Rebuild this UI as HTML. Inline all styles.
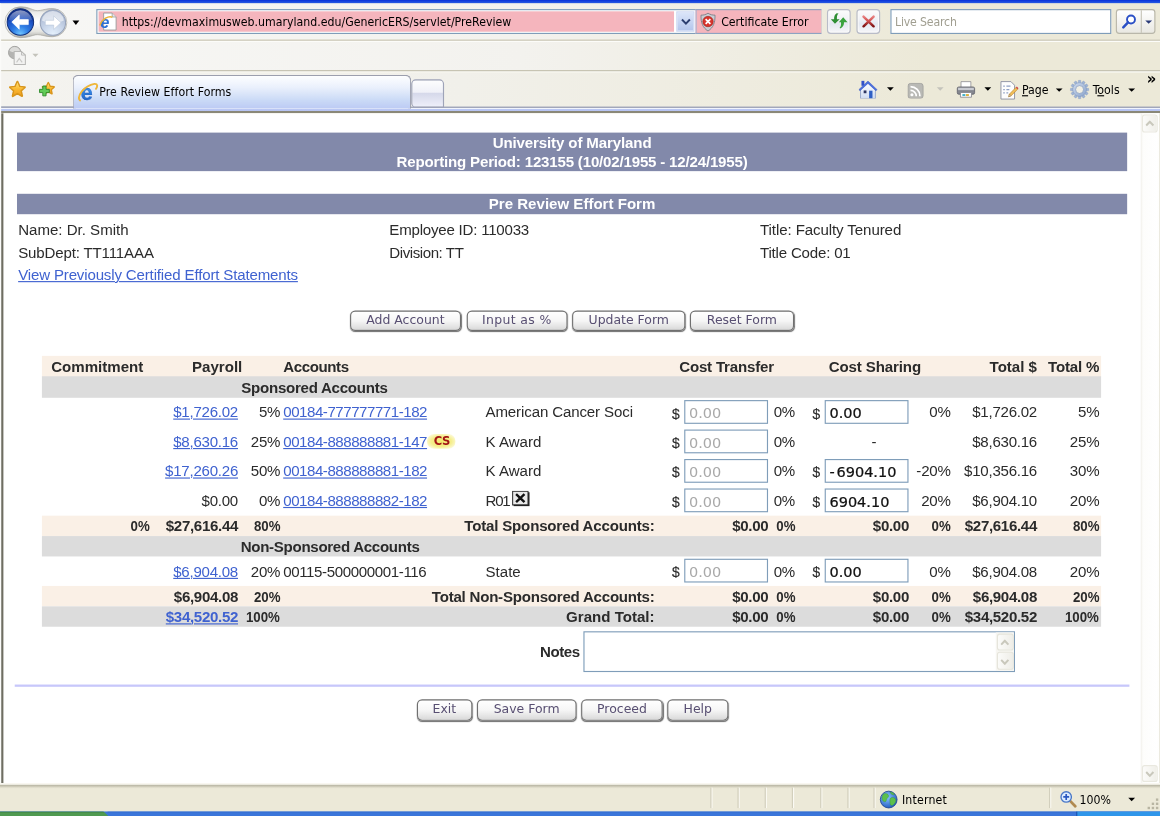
<!DOCTYPE html>
<html lang="en">
<head>
<meta charset="utf-8">
<title>Pre Review Effort Forms</title>
<style>
html,body{margin:0;padding:0;background:#ece9d8;overflow:hidden;}
body{width:1160px;height:816px;position:relative;}
#w{filter:blur(0.42px);position:absolute;left:0;top:0;width:1024px;height:720px;transform-origin:0 0;transform:scale(1.1328125,1.1333333);overflow:hidden;background:#ece9d8;font-family:"DejaVu Sans Condensed","DejaVu Sans",sans-serif;font-size:10.8px;color:#000;}
#w *{box-sizing:border-box;}
.abs{position:absolute;}
/* ---------- chrome ---------- */
#tstrip{position:absolute;left:0;top:0;width:1024px;height:3.4px;background:linear-gradient(#0831d9,#2a5fe4);}
#nav{position:absolute;left:0;top:3px;width:1024px;height:33px;background:linear-gradient(90deg,#f7f7f5 0%,#f3f2ee 45%,#ece9d8 80%);border-bottom:1px solid #c2bfae;}
#row2{position:absolute;left:0;top:36px;width:1024px;height:27px;background:linear-gradient(90deg,#f7f7f5 0%,#f3f2ee 45%,#ece9d8 80%);border-top:1px solid #fdfdfb;border-bottom:1px solid #b9b6a5;}
#tabs{position:absolute;left:0;top:63px;width:1024px;height:32px;background:linear-gradient(90deg,#f4f3ef 0%,#f1f0ea 40%,#ece9d8 80%);border-top:1px solid #fbfbf8;}
#tabline{position:absolute;left:0;top:94.2px;width:1024px;height:6px;background:linear-gradient(#a2a7ba 0,#a2a7ba .9px,#f1f4fc .9px,#f1f4fc 1.8px,#bcc9f4 1.8px,#b6c3f2 4.1px,#8a8878 4.1px,#8a8878 5.6px,#d8d7d0 6px);}
/* ---------- content ---------- */
#content{position:absolute;left:0;top:100px;width:1024px;height:591px;background:#fff;border-left:1px solid #f4f3ee;font-family:"Liberation Sans",sans-serif;font-size:13px;color:#2e2e2e;}
#lb{position:absolute;left:1.1px;top:99.6px;width:1.8px;height:592px;background:#6f6e62;}
#status{position:absolute;left:0;top:691px;width:1024px;height:25px;background:#ece9d8;border-top:1px solid #fbfaf5;}
#taskbar{position:absolute;left:0;top:716px;width:1024px;height:4px;background:#3b76da;}

/* ---------- page ---------- */
#pg{position:absolute;left:0;top:0;width:1024px;height:720px;font-family:"Liberation Sans",sans-serif;font-size:13.3px;color:#2b2b2b;}
#pg a{color:#3f62d0;text-decoration:underline;text-decoration-thickness:1.1px;text-underline-offset:1.1px;}
.band{position:absolute;left:15px;width:980px;background:#8289aa;color:#fff;font-weight:bold;text-align:center;white-space:nowrap;}
.t{position:absolute;white-space:nowrap;line-height:18px;height:18px;}
.btn{position:absolute;height:18.4px;margin-top:0.2px;border:1.05px solid #707070;border-radius:4.6px;background:linear-gradient(#ffffff 0%,#f6f6f6 50%,#e6e6e6 78%,#d9d9d9 100%);box-shadow:0.3px 0.9px 0.9px rgba(60,60,60,.75);font-family:"DejaVu Sans",sans-serif;font-size:11px;line-height:16.6px;color:#584f72;text-align:center;white-space:nowrap;}
.r{position:absolute;left:37px;width:935px;}
.h18{height:18px;line-height:19px;}
.h26{height:26px;line-height:26.4px;--dy:.3px;}
.lin{background:#faf0e6;}
.gry{background:#dcdcdc;}
.c{position:absolute;top:0;white-space:nowrap;transform:translateY(var(--dy,0px));}
.b{font-weight:bold;}
.n{letter-spacing:-0.22px;}
.b .n{letter-spacing:-0.28px;}
.na{letter-spacing:-0.4px;}
.b .bp{letter-spacing:0;transform:translateY(var(--dy,0px)) scaleX(.88);transform-origin:100% 50%;}
.k1{right:839.4px}.k2{right:761.9px}.k3{right:724.6px}.k4{left:213px}.k5{left:391.6px}.k6{right:394.2px}
.k7{left:556.2px}.k8{right:270.2px}.k8b{right:293.8px}.k9{left:680.2px}.k10{right:132.9px}.k10b{right:169.6px}.k11{right:56.6px}.k12{right:1.6px}
.ds{font-size:12.2px;top:1.3px;-webkit-text-stroke:0.15px #2b2b2b;}
.inp{position:absolute;top:1.85px;width:74px;height:21.8px;border:1px solid #7f9db9;background:#fff;font-family:"DejaVu Sans",sans-serif;font-size:12.8px;line-height:21px;padding-left:2.9px;color:#111;white-space:nowrap;overflow:hidden;}
.i1{left:567.3px;color:#a9a9a9;}
.i2{left:691.3px;-webkit-text-stroke:0.22px #111;}

/* ---------- chrome details ---------- */
.ct{position:absolute;white-space:nowrap;font-family:"DejaVu Sans Condensed","DejaVu Sans",sans-serif;font-size:10.8px;line-height:14px;color:#000;}
.ar{position:absolute;width:0;height:0;border-left:3.2px solid transparent;border-right:3.2px solid transparent;border-top:3.6px solid #000;}
#addr{position:absolute;left:85px;top:8px;width:640px;height:22px;border:1px solid #7f9db9;background:#fff;}
#addr .pink{position:absolute;left:1px;top:1px;width:508.4px;height:18px;background:#f5b5bd;}
#addr .dd{position:absolute;left:511px;top:1px;width:15.6px;height:18px;background:linear-gradient(#dbe5f9,#b4c6ec);border:1px solid #c9d6f2;}
#addr .cert{position:absolute;left:527.6px;top:-1px;width:111.4px;height:22px;background:#f5b5bd;border-top:1px solid #8da3c2;border-bottom:1px solid #8da3c2;border-left:1px solid #a9b3cf;}
.nbtn{position:absolute;top:8.3px;width:21.2px;height:21.4px;border:1px solid #b9bcc8;border-radius:3.2px;background:linear-gradient(#fcfcfc 0%,#f1f2f6 40%,#e3e7f1 60%,#f7f7f9 100%);box-shadow:inset 0 0 0 1px #fafafa;}
#srch{position:absolute;left:786px;top:8px;width:194.5px;height:21.5px;border:1px solid #7f9db9;background:#fff;}
#sbtn{position:absolute;left:984.5px;top:8px;width:35px;height:21.5px;border:1px solid #b9b7aa;border-radius:3px;background:linear-gradient(#ffffff,#e9e8e2);}
#tab{position:absolute;left:64.3px;top:65.6px;width:299.2px;height:30.9px;border:1px solid #9c9fae;border-bottom:none;border-radius:5px 5px 0 0;background:linear-gradient(#fdfeff 0%,#eaf0fc 35%,#c9d9f6 75%,#bccaf4 100%);z-index:2;}
#ntab{position:absolute;left:363px;top:69.5px;width:29.4px;height:25.4px;border:1px solid #9ea3b8;border-radius:4px 4px 0 4px;background:linear-gradient(#fdfdfe 0%,#f0f1f8 45%,#d6d9ea 50%,#eeeffa 100%);z-index:1;}
.ssep{position:absolute;top:695px;width:1px;height:18px;background:#d2cfbd;box-shadow:1px 0 0 #fbfaf4;}

.sbb{position:absolute;left:1007.5px;width:14.4px;height:15.5px;border:1px solid #e9e8df;border-radius:2.5px;background:linear-gradient(90deg,#fbfbf9,#f0efe9);}
.tsb{position:absolute;left:879.6px;width:15px;border:1px solid #e6e5dc;border-radius:2.5px;background:linear-gradient(90deg,#fbfbf9,#efeee8);}
</style>
</head>
<body>
<div id="w">
<div id="tstrip"></div>
<div id="nav"></div>
<svg class="abs" style="left:2px;top:4px;" width="64" height="32" viewBox="0 0 64 32">
 <defs>
  <radialGradient id="gb" cx="50%" cy="95%" r="85%"><stop offset="0" stop-color="#6fc4ff"/><stop offset=".35" stop-color="#2f7fe6"/><stop offset=".7" stop-color="#1d52c4"/><stop offset="1" stop-color="#0c2a86"/></radialGradient>
  <linearGradient id="gbg" x1="0" y1="0" x2="0" y2="1"><stop offset="0" stop-color="#fff" stop-opacity=".55"/><stop offset="1" stop-color="#fff" stop-opacity=".05"/></linearGradient>
  <radialGradient id="gf" cx="50%" cy="95%" r="85%"><stop offset="0" stop-color="#e4f0fc"/><stop offset=".5" stop-color="#c9d6ea"/><stop offset="1" stop-color="#a9b7d0"/></radialGradient>
  <linearGradient id="gp" x1="0" y1="0" x2="0" y2="1"><stop offset="0" stop-color="#a9a9a5"/><stop offset=".18" stop-color="#ecece9"/><stop offset=".5" stop-color="#ffffff"/><stop offset=".8" stop-color="#e4e4e0"/><stop offset="1" stop-color="#adada8"/></linearGradient>
 </defs>
 <path d="M16 2 C24 2 27 5.4 31 5.4 C35 5.4 38 3.6 44.6 3.6 A12.4 12.4 0 0 1 44.6 28.4 C38 28.4 35 26.6 31 26.6 C27 26.6 24 29.2 16 29.2 A13.6 13.6 0 0 1 16 2Z" fill="url(#gp)" stroke="#a5a5a0" stroke-width=".6"/>
 <circle cx="16" cy="15.5" r="11.7" fill="url(#gb)" stroke="#12307a" stroke-width=".9"/>
 <path d="M5.6 13.5 A10.6 10.6 0 0 1 26.4 13.5 C21 16.4 11 16.4 5.6 13.5Z" fill="url(#gbg)"/>
 <path d="M8.4 15.5 L15 9.2 L15 13.3 L23 13.3 L23 17.7 L15 17.7 L15 21.8Z" fill="#fff" stroke="#fff" stroke-width=".6" stroke-linejoin="round"/>
 <circle cx="44.7" cy="16" r="11.2" fill="url(#gf)" stroke="#95a2ba" stroke-width=".9"/>
 <path d="M35 14 A9.8 9.8 0 0 1 54.4 14 C49 16.6 40 16.6 35 14Z" fill="#fff" fill-opacity=".55"/>
 <path d="M51.8 16 L45.4 10 L45.4 13.9 L38 13.9 L38 18.1 L45.4 18.1 L45.4 22Z" fill="#fff" stroke="#b9c4d8" stroke-width=".5" stroke-linejoin="round"/>
</svg>
<div class="ar" style="left:64.4px;top:17.8px;border-left-width:3.8px;border-right-width:3.8px;border-top-width:4.3px;"></div>
<div id="addr">
 <div class="pink"></div>
 <svg class="abs" style="left:0.8px;top:1px;" width="17" height="18" viewBox="0 0 17 18">
  <path d="M4.5 1.5 H12 L15.5 5 V16.5 H4.5Z" fill="#fff" stroke="#9a9a9a" stroke-width=".8"/>
  <path d="M12 1.5 V5 H15.5" fill="#e6e6e6" stroke="#9a9a9a" stroke-width=".7"/>
  <text x="1.6" y="14.6" font-family="Liberation Sans, sans-serif" font-weight="bold" font-style="italic" font-size="14.5" fill="#2a6fd6">e</text>
  <path d="M1.2 12.5 C3 6.5 9 3.8 12.2 5.2" fill="none" stroke="#e8b33a" stroke-width="1.3"/>
 </svg>
 <div class="ct" style="left:21.4px;top:4px;">https://devmaximusweb.umaryland.edu/GenericERS/servlet/PreReview</div>
 <div class="dd"><svg class="abs" style="left:2.5px;top:5px;" width="9" height="7" viewBox="0 0 9 7"><path d="M1 1.2 L4.5 4.8 L8 1.2" fill="none" stroke="#2c3f70" stroke-width="1.7"/></svg></div>
 <div class="cert">
  <svg class="abs" style="left:3.6px;top:2px;" width="14" height="17" viewBox="0 0 14 17">
   <path d="M7 .6 C5 2 3 2.4 .8 2.4 C.6 9 2.4 13.4 7 16.4 C11.6 13.4 13.4 9 13.2 2.4 C11 2.4 9 2 7 .6Z" fill="#c9ccd2" stroke="#7c7f88" stroke-width=".8"/>
   <circle cx="7" cy="8" r="4.6" fill="#d8342c" stroke="#9c1c18" stroke-width=".5"/>
   <path d="M4.9 5.9 L9.1 10.1 M9.1 5.9 L4.9 10.1" stroke="#fff" stroke-width="1.5"/>
  </svg>
  <div class="ct" style="left:22px;top:4px;">Certificate Error</div>
 </div>
</div>
<div class="nbtn" style="left:729.8px;">
 <svg class="abs" style="left:-1px;top:-1px;" width="21.2" height="21.4" viewBox="0 0 21.2 21.4">
  <path d="M7.06 12.9 L3.4 9 L6.3 9 C6.2 6.4 7 4.6 8.6 3.7 L10.2 3.9 C9 5 8.7 6.6 8.8 9 L11.2 9Z" fill="#2f8f35"/>
  <path d="M14.37 7.3 L18.2 11.7 L15.1 11.7 C15.2 14.2 14 16.4 11.6 17.2 L11.2 16.6 C12.4 15.6 12.6 13.8 12.4 11.7 L10.5 11.7Z" fill="#3aa23e"/>
 </svg>
</div>
<div class="nbtn" style="left:755.8px;">
 <svg class="abs" style="left:-1px;top:-1px;" width="21.2" height="21.4" viewBox="0 0 21.2 21.4">
  <defs><linearGradient id="gx" x1="0" y1="0" x2="0" y2="1"><stop offset="0" stop-color="#e88080"/><stop offset=".45" stop-color="#d05050"/><stop offset="1" stop-color="#7e1212"/></linearGradient></defs>
  <path d="M6.3 6.6 L15.2 15.2 M15.2 6.6 L6.3 15.2" stroke="url(#gx)" stroke-width="2.2" stroke-linecap="round"/>
 </svg>
</div>
<div id="srch"><div class="ct" style="left:3px;top:3.6px;color:#a09e90;letter-spacing:-.15px;">Live Search</div></div>
<div id="sbtn">
 <div class="abs" style="left:21px;top:0;width:1px;height:19.5px;background:#c6c4b8;"></div>
 <svg class="abs" style="left:4px;top:3px;" width="14" height="14" viewBox="0 0 14 14"><circle cx="8.4" cy="5.2" r="3.5" fill="#fff" stroke="#2b50c6" stroke-width="1.7"/><path d="M5.8 7.8 L1.6 12.2" stroke="#2b50c6" stroke-width="2.2" stroke-linecap="round"/></svg>
 <div class="ar" style="left:25px;top:8.6px;border-top-color:#2a3a78;"></div>
</div>
<div id="row2"></div>
<svg class="abs" style="left:6px;top:40px;" width="30" height="18" viewBox="0 0 30 18">
 <circle cx="7" cy="6.4" r="5.5" fill="#b4b4b2" stroke="#a0a09e" stroke-width=".8"/><path d="M2.4 5 A4.8 4.8 0 0 1 11.6 5 C8.6 6.6 5.4 6.6 2.4 5Z" fill="#dcdcda"/>
 <path d="M6.5 5.5 H13 L16.4 8.6 V17 H6.5Z" fill="#f2f2f1" stroke="#b8b8b6" stroke-width=".9"/>
 <path d="M13 5.5 V8.6 H16.4" fill="none" stroke="#b8b8b6" stroke-width=".8"/>
 <path d="M8.6 15 L11 11.6 L13.6 15" fill="none" stroke="#c8c8c6" stroke-width="1"/>
 <path d="M22.6 7.4 H28 L25.3 10.4Z" fill="#c4c3bb"/>
</svg>
<div id="tabs"></div>
<div class="abs" style="left:0;top:94px;width:64.5px;height:1px;background:#9aa3b8;"></div>
<svg class="abs" style="left:6.6px;top:69.6px;" width="45" height="18" viewBox="0 0 50 20">
 <defs><linearGradient id="gs" x1="0" y1="0" x2="0" y2="1"><stop offset="0" stop-color="#ffe27a"/><stop offset=".5" stop-color="#fbbb34"/><stop offset="1" stop-color="#f0a020"/></linearGradient></defs>
 <path d="M9.3 2.4 L11.5 7.2 L16.6 7.8 L12.8 11.3 L13.9 16.4 L9.3 13.8 L4.7 16.4 L5.8 11.3 L2 7.8 L7.1 7.2Z" fill="url(#gs)" stroke="#d9961c" stroke-width="2" stroke-linejoin="round"/><path d="M9.3 3 L11.1 7.6 L15.6 8.1 L12.2 11 L13.2 15.4 L9.3 13.1 L5.4 15.4 L6.4 11 L3 8.1 L7.5 7.6Z" fill="url(#gs)"/>
 <path d="M39.6 3.4 L41.3 7 L45.2 7.5 L42.3 10.1 L43.1 14 L39.6 12 L36.1 14 L36.9 10.1 L34 7.5 L37.9 7Z" fill="url(#gs)" stroke="#d9961c" stroke-width="1.8" stroke-linejoin="round"/><path d="M39.6 4 L41 7.4 L44.4 7.8 L41.8 10 L42.5 13.2 L39.6 11.5 L36.7 13.2 L37.4 10 L34.8 7.8 L38.2 7.4Z" fill="url(#gs)"/>
 <path d="M31.4 8.2 H34.6 V5 H37.8 V8.2 H41 V11.4 H37.8 V14.6 H34.6 V11.4 H31.4Z" fill="#62cc58" stroke="#2d8a2c" stroke-width=".9" stroke-linejoin="round" transform="translate(-.4 1.6)"/>
</svg>
<div id="tab">
 <svg class="abs" style="left:2.6px;top:5.6px;" width="20" height="19" viewBox="0 0 20 19">
  <defs><linearGradient id="ge" x1="0" y1="0" x2="0" y2="1"><stop offset="0" stop-color="#6fb4f4"/><stop offset=".5" stop-color="#2f80e0"/><stop offset="1" stop-color="#1a56b8"/></linearGradient></defs>
  <text x="3.2" y="15.8" font-family="Liberation Sans, sans-serif" font-weight="bold" font-size="19" fill="url(#ge)" stroke="#1d58b4" stroke-width=".3">e</text>
  <path d="M2.6 16.6 C-0.6 13 6 3.6 15.4 2 C18.4 1.8 18.2 4.2 16.8 6.4" fill="none" stroke="#eeb63a" stroke-width="1.7" stroke-linecap="round"/>
 </svg>
 <div class="ct" style="left:22.4px;top:8.7px;letter-spacing:.05px;">Pre Review Effort Forms</div>
</div>
<div id="ntab"></div>
<!-- right toolbar -->
<svg class="abs" style="left:758.4px;top:70.6px;" width="16.4" height="16.4" viewBox="0 0 16 16">
 <defs><linearGradient id="gh" x1="0" y1="0" x2="0" y2="1"><stop offset="0" stop-color="#ffffff"/><stop offset="1" stop-color="#cfdcf2"/></linearGradient></defs>
 <rect x="2.4" y=".2" width="2.5" height="4.4" fill="#3252c8"/>
 <path d="M8 2 L14.4 8 V15.6 H1.6 V8Z" fill="url(#gh)" stroke="#8a9cc4" stroke-width=".7"/>
 <path d="M8 .5 L15.9 7.9 L14.9 8.9 L8 2.6 L1.1 8.9 L.1 7.9Z" fill="#4a6fe0" stroke="#3454c0" stroke-width=".4"/>
 <rect x="9" y="8.8" width="2.9" height="6.6" fill="#2f5fc4"/>
 <rect x="4.3" y="8.6" width="2.4" height="2.4" fill="#2c3560"/>
</svg>
<div class="ar" style="left:783.2px;top:77.2px;"></div>
<svg class="abs" style="left:801px;top:72.6px;" width="14.6" height="14.6" viewBox="0 0 16 16">
 <rect x=".6" y=".6" width="14.6" height="14.6" rx="2.6" fill="#b9b9b5" stroke="#a2a29e" stroke-width=".8"/>
 <circle cx="4.4" cy="11.6" r="1.5" fill="#fff"/>
 <path d="M3 7.4 A5.6 5.6 0 0 1 8.6 13 M3 3.8 A9.2 9.2 0 0 1 12.2 13" fill="none" stroke="#fff" stroke-width="1.6"/>
</svg>
<div class="ar" style="left:826.6px;top:77.2px;border-top-color:#c4c3bb;"></div>
<svg class="abs" style="left:844.2px;top:70.8px;" width="17.4" height="16" viewBox="0 0 20 18">
 <path d="M5 1 H15 V7 H5Z" fill="#fff" stroke="#8a8a90" stroke-width=".8"/>
 <rect x="1.2" y="6.4" width="17.6" height="7.4" rx="1.6" fill="#84868e" stroke="#5e6068" stroke-width=".8"/>
 <rect x="2" y="7.2" width="16" height="2.4" fill="#c9cbd2"/>
 <path d="M4.4 12 H15.6 V16.8 H4.4Z" fill="#fff" stroke="#7e8088" stroke-width=".8"/>
 <rect x="6.4" y="13.6" width="3" height="2" fill="#44b0c8"/><rect x="10" y="13.6" width="3" height="2" fill="#d8b040"/>
</svg>
<div class="ar" style="left:869px;top:77.2px;"></div>
<svg class="abs" style="left:882px;top:70.5px;" width="18" height="18" viewBox="0 0 18 18">
 <path d="M1.6 1 H10.4 L13.6 4.2 V16.4 H1.6Z" fill="#fdfdfd" stroke="#8b8fa0" stroke-width=".8"/>
 <path d="M3.6 5 H5 M3.6 8 H5 M3.6 11 H5 M6.4 5 H10 M6.4 8 H9 M6.4 11 H8" stroke="#8fa0c4" stroke-width="1.1"/>
 <path d="M8.4 14.4 L9.1 12 L14.8 6.2 L16.3 7.7 L10.6 13.5Z" fill="#f2c05a" stroke="#b27616" stroke-width=".5"/><path d="M14.8 6.2 L15.6 5.4 L17.1 6.9 L16.3 7.7Z" fill="#d04040"/>
 <path d="M8.4 14.4 L9.1 12 L10.6 13.5Z" fill="#e8d6b0" stroke="#8a6a3a" stroke-width=".4"/>
</svg>
<div class="ct" style="left:902.2px;top:73.2px;"><u>P</u>age</div>
<div class="ar" style="left:932.3px;top:78.1px;"></div>
<svg class="abs" style="left:943.6px;top:70.2px;" width="18" height="18" viewBox="0 0 18 18">
 <defs><linearGradient id="gr" x1="0" y1="0" x2="1" y2="1"><stop offset="0" stop-color="#cfdbee"/><stop offset="1" stop-color="#8ba4cc"/></linearGradient></defs>
 <g fill="#9fb4d6" stroke="#7f98c0" stroke-width=".3">
  <g id="tt"><rect x="7.9" y=".9" width="2.2" height="2.6" rx=".4"/><rect x="7.9" y="14.5" width="2.2" height="2.6" rx=".4"/></g><use href="#tt" transform="rotate(30 9 9)"/><use href="#tt" transform="rotate(60 9 9)"/><use href="#tt" transform="rotate(90 9 9)"/><use href="#tt" transform="rotate(120 9 9)"/><use href="#tt" transform="rotate(150 9 9)"/>
 </g>
 <circle cx="9" cy="9" r="6.1" fill="url(#gr)" stroke="#7f98c0" stroke-width=".5"/>
 <circle cx="9" cy="9" r="3.5" fill="#f1efe4" stroke="#7f98c0" stroke-width=".6"/>
</svg>
<div class="ct" style="left:964.6px;top:73.2px;">T<u>o</u>ols</div>
<div class="ar" style="left:995.6px;top:78.1px;"></div>
<div class="ct" style="left:1012.4px;top:62px;font-size:14.5px;font-weight:bold;letter-spacing:-1px;">»</div>
<div id="tabline"></div>
<div id="content"></div>
<div id="lb"></div>
<div class="abs" style="left:0;top:3.4px;width:.9px;height:712px;background:#fbfbf9;"></div>
<div id="pg">
<div class="band" style="top:117.2px;height:33.9px;"><div class="abs" style="left:0;width:980px;top:1.9px;line-height:16px;letter-spacing:-.11px">University of Maryland</div><div class="abs" style="left:0;width:980px;top:18.2px;line-height:16px;letter-spacing:-.16px">Reporting Period: 123155 (10/02/1955 - 12/24/1955)</div></div>
<div class="band" style="top:171px;height:18px;line-height:18px;">Pre Review Effort Form</div>
<div class="t" style="left:16px;top:193.9px;">Name: Dr. Smith</div>
<div class="t" style="left:343.7px;top:193.9px;letter-spacing:-.19px;">Employee ID: 110033</div>
<div class="t" style="left:670.9px;top:193.9px;letter-spacing:-.08px;">Title: Faculty Tenured</div>
<div class="t" style="left:16px;top:214.1px;letter-spacing:-.13px;transform:translateY(.5px);">SubDept: TT111AAA</div>
<div class="t" style="left:343.7px;top:214.1px;letter-spacing:-.38px;transform:translateY(.5px);">Division: TT</div>
<div class="t" style="left:670.9px;top:214.1px;letter-spacing:-.17px;transform:translateY(.5px);">Title Code: 01</div>
<div class="t" style="left:16px;top:234px;letter-spacing:-.14px;"><a>View Previously Certified Effort Statements</a></div>

<div class="btn" style="left:309px;top:273.5px;width:97.7px;">Add Account</div>
<div class="btn" style="left:411.6px;top:273.5px;width:89.4px;"><span style="letter-spacing:.3px">Input as %</span></div>
<div class="btn" style="left:505.4px;top:273.5px;width:99.3px;">Update Form</div>
<div class="btn" style="left:609.1px;top:273.5px;width:91.6px;">Reset Form</div>

<div class="r h18 lin b" style="top:314.4px;height:18.3px;">
 <span class="c" style="left:8.2px;">Commitment</span>
 <span class="c" style="left:132.5px;">Payroll</span>
 <span class="c k4" style="letter-spacing:-.35px">Accounts</span>
 <span class="c" style="left:562.6px;letter-spacing:-.17px">Cost Transfer</span>
 <span class="c" style="left:694.6px;letter-spacing:-.11px">Cost Sharing</span>
 <span class="c k11">Total $</span>
 <span class="c k12" style="letter-spacing:-.15px">Total %</span>
</div>
<div class="r h18 gry b" style="top:332.4px;height:18.2px;--dy:.35px;"><span class="c" style="left:176px;letter-spacing:-.23px">Sponsored Accounts</span></div>

<div class="r h26" style="top:350.7px;">
 <span class="c k2 n"><a>$1,726.02</a></span><span class="c k3 n">5%</span><span class="c k4 na"><a>00184-777777771-182</a></span>
 <span class="c k5" style="letter-spacing:-.11px">American Cancer Soci</span>
 <span class="c k7 ds">$</span><div class="inp i1">0.00</div><span class="c k8 n">0%</span>
 <span class="c k9 ds">$</span><div class="inp i2">0.00</div><span class="c k10 n">0%</span>
 <span class="c k11 n">$1,726.02</span><span class="c k12 n">5%</span>
</div>
<div class="r h26" style="top:376.7px;">
 <span class="c k2 n"><a>$8,630.16</a></span><span class="c k3 n">25%</span><span class="c k4 na"><a>00184-888888881-147</a></span>
 <span class="c k5">K Award</span>
 <span class="c k7 ds">$</span><div class="inp i1">0.00</div><span class="c k8 n">0%</span>
 <span class="c" style="left:732.3px;">-</span>
 <span class="c k11 n">$8,630.16</span><span class="c k12 n">25%</span>
</div>
<div class="r h26" style="top:402.7px;">
 <span class="c k2 n"><a>$17,260.26</a></span><span class="c k3 n">50%</span><span class="c k4 na"><a>00184-888888881-182</a></span>
 <span class="c k5">K Award</span>
 <span class="c k7 ds">$</span><div class="inp i1">0.00</div><span class="c k8 n">0%</span>
 <span class="c k9 ds">$</span><div class="inp i2"><span style="letter-spacing:1.6px">-</span>6904.10</div><span class="c k10 n">-20%</span>
 <span class="c k11 n">$10,356.16</span><span class="c k12 n">30%</span>
</div>
<div class="r h26" style="top:428.7px;">
 <span class="c k2 n">$0.00</span><span class="c k3 n">0%</span><span class="c k4 na"><a>00184-888888882-182</a></span>
 <span class="c k5" style="letter-spacing:-1.1px">R01</span>
 <span class="c k7 ds">$</span><div class="inp i1">0.00</div><span class="c k8 n">0%</span>
 <span class="c k9 ds">$</span><div class="inp i2">6904.10</div><span class="c k10 n">20%</span>
 <span class="c k11 n">$6,904.10</span><span class="c k12 n">20%</span>
</div>
<div class="r h18 lin b" style="top:454.7px;--dy:-.6px;">
 <span class="c k1 n bp">0%</span><span class="c k2 n">$27,616.44</span><span class="c k3 n bp">80%</span>
 <span class="c k6" style="letter-spacing:-.17px">Total Sponsored Accounts:</span>
 <span class="c k8b n">$0.00</span><span class="c k8 n bp">0%</span>
 <span class="c k10b n">$0.00</span><span class="c k10 n bp">0%</span>
 <span class="c k11 n">$27,616.44</span><span class="c k12 n bp">80%</span>
</div>
<div class="r h18 gry b" style="top:472.7px;"><span class="c" style="left:175.5px;letter-spacing:-.26px">Non-Sponsored Accounts</span></div>
<div class="r h26" style="top:490.7px;line-height:27.4px;--dy:-.15px;">
 <span class="c k2 n"><a>$6,904.08</a></span><span class="c k3 n">20%</span><span class="c k4 na" style="letter-spacing:-.33px">00115-500000001-116</span>
 <span class="c k5">State</span>
 <span class="c k7 ds">$</span><div class="inp i1">0.00</div><span class="c k8 n">0%</span>
 <span class="c k9 ds">$</span><div class="inp i2">0.00</div><span class="c k10 n">0%</span>
 <span class="c k11 n">$6,904.08</span><span class="c k12 n">20%</span>
</div>
<div class="r h18 lin b" style="top:516.7px;--dy:-.2px;">
 <span class="c k2 n">$6,904.08</span><span class="c k3 n bp">20%</span>
 <span class="c k6" style="letter-spacing:-.2px">Total Non-Sponsored Accounts:</span>
 <span class="c k8b n">$0.00</span><span class="c k8 n bp">0%</span>
 <span class="c k10b n">$0.00</span><span class="c k10 n bp">0%</span>
 <span class="c k11 n">$6,904.08</span><span class="c k12 n bp">20%</span>
</div>
<div class="r h18 gry b" style="top:534.7px;">
 <span class="c k2 n"><a>$34,520.52</a></span><span class="c k3 n bp">100%</span>
 <span class="c k6">Grand Total:</span>
 <span class="c k8b n">$0.00</span><span class="c k8 n bp">0%</span>
 <span class="c k10b n">$0.00</span><span class="c k10 n bp">0%</span>
 <span class="c k11 n">$34,520.52</span><span class="c k12 n bp">100%</span>
</div>

<div class="t b" style="left:476.7px;top:566.6px;letter-spacing:-.38px;">Notes</div>
<div class="abs" style="left:515.3px;top:557px;width:381.2px;height:35.7px;border:1px solid #7f9db9;background:#fff;"></div>
<div class="abs" style="left:12.8px;top:604.2px;width:983.8px;height:1.4px;background:#c7c7fb;"></div>

<div class="btn" style="left:367.5px;top:617.2px;width:49.6px;">Exit</div>
<div class="btn" style="left:421.1px;top:617.2px;width:87.6px;">Save Form</div>
<div class="btn" style="left:513.1px;top:617.2px;width:71.9px;">Proceed</div>
<div class="btn" style="left:589.2px;top:617.2px;width:53.5px;">Help</div>

<!-- page scrollbar -->
<div class="abs" style="left:1006.5px;top:100px;width:17.5px;height:591px;background:linear-gradient(90deg,#f1f0ea 0,#fdfdfb 2px,#ffffff 14px,#fefefc 16.2px,#e9e7dc 16.4px,#f3f2ec 100%);"></div>
<div class="sbb" style="top:101.2px;"><svg class="abs" style="left:2.4px;top:4px;" width="8" height="6" viewBox="0 0 8 6"><path d="M.8 4.8 L4 1.4 L7.2 4.8" fill="none" stroke="#c9c8bc" stroke-width="1.8"/></svg></div>
<div class="sbb" style="top:674.5px;"><svg class="abs" style="left:2.4px;top:4.4px;" width="8" height="6" viewBox="0 0 8 6"><path d="M.8 1.2 L4 4.6 L7.2 1.2" fill="none" stroke="#c9c8bc" stroke-width="1.8"/></svg></div>
<!-- textarea scrollbar -->
<div class="abs" style="left:878.6px;top:558px;width:16.9px;height:33.7px;background:#f7f6f2;"></div>
<div class="tsb" style="top:559.2px;height:15px;"><svg class="abs" style="left:2.6px;top:3.6px;" width="8" height="6" viewBox="0 0 8 6"><path d="M.8 4.8 L4 1.4 L7.2 4.8" fill="none" stroke="#c9c8bc" stroke-width="1.8"/></svg></div>
<div class="tsb" style="top:575.4px;height:15.4px;"><svg class="abs" style="left:2.6px;top:4.2px;" width="8" height="6" viewBox="0 0 8 6"><path d="M.8 1.2 L4 4.6 L7.2 1.2" fill="none" stroke="#c9c8bc" stroke-width="1.8"/></svg></div>
<!-- cs badge -->
<div class="abs" style="left:377.4px;top:382.8px;width:24.6px;height:13px;border-radius:6px;background:radial-gradient(ellipse at center,#f3e96a 0%,#f5ee8c 50%,rgba(250,245,180,.5) 80%,rgba(250,245,190,0) 100%);"></div>
<div class="abs" style="left:382.8px;top:383px;font-family:'DejaVu Sans',sans-serif;font-weight:bold;font-size:10.2px;line-height:13px;color:#a31616;letter-spacing:-0.2px;">CS</div>
<!-- x box -->
<svg class="abs" style="left:452.2px;top:433px;" width="15.4" height="13.6" viewBox="0 0 15.4 13.6">
 <rect x=".5" y=".5" width="13.6" height="12" fill="#e9e9e9" stroke="#3c3c3c" stroke-width="1"/>
 <path d="M14.8 1.4 V13.1 H1.4" fill="none" stroke="#222" stroke-width="1.3"/>
 <path d="M3.6 3 L11 10 M11 3 L3.6 10" stroke="#111" stroke-width="2.1"/>
</svg>
</div>

<div id="status"></div>
<div class="abs" style="left:0;top:691.8px;width:1024px;height:4.4px;background:linear-gradient(#f4f3ec 0%,#bdbaa8 28%,#d3d0be 55%,#e6e3d2 80%,#ece9d8 100%);"></div>
<div class="ssep" style="left:627px;"></div><div class="ssep" style="left:651px;"></div><div class="ssep" style="left:675px;"></div><div class="ssep" style="left:699px;"></div><div class="ssep" style="left:723.5px;"></div><div class="ssep" style="left:747.5px;"></div><div class="ssep" style="left:771px;"></div><div class="ssep" style="left:926px;"></div>
<svg class="abs" style="left:776px;top:697px;" width="17" height="17" viewBox="0 0 17 17">
 <defs><radialGradient id="gg" cx="40%" cy="35%" r="70%"><stop offset="0" stop-color="#8cc8ff"/><stop offset="1" stop-color="#1e58c0"/></radialGradient></defs>
 <circle cx="8.5" cy="8.5" r="7.4" fill="url(#gg)" stroke="#1b3f8a" stroke-width=".7"/>
 <path d="M4 3.6 C6 2.6 8 3.4 8.4 5 C8.8 6.8 6.6 7.2 6.4 9 C6.2 10.8 4.8 11 3.4 9.6 C2.2 8.2 2.4 5 4 3.6Z M10.6 7 C12.4 6 14.8 7.2 14.8 9.4 C14.6 11.8 12.4 14 10.8 13.6 C9.4 13.2 9.8 11.4 9.6 10 C9.4 8.6 9.6 7.6 10.6 7Z M9.6 1.8 C11.4 1.8 13 2.8 13.6 4 C12.4 4.6 10.6 4.2 9.6 1.8Z" fill="#5cc04c" stroke="#2f8a2c" stroke-width=".3"/>
</svg>
<div class="ct" style="left:796.2px;top:698.8px;letter-spacing:.15px;">Internet</div>
<svg class="abs" style="left:935px;top:697px;" width="16" height="16" viewBox="0 0 16 16">
 <path d="M9.4 9.4 L14.2 14.4" stroke="#b08a50" stroke-width="2.4" stroke-linecap="round"/>
 <circle cx="6.2" cy="6.2" r="4.6" fill="#dcecff" stroke="#4a78c8" stroke-width="1.2"/>
 <path d="M3.6 6.2 H8.8 M6.2 3.6 V8.8" stroke="#2a58c0" stroke-width="1.5"/>
</svg>
<div class="ct" style="left:953px;top:698.8px;">100%</div>
<div class="ar" style="left:996.4px;top:704.4px;"></div>
<svg class="abs" style="left:1012.4px;top:703.6px;" width="12.6" height="12.6" viewBox="0 0 12 12">
 <g fill="#b8b5a2"><rect x="8" y="0.5" width="2" height="2"/><rect x="4.5" y="4" width="2" height="2"/><rect x="8" y="4" width="2" height="2"/><rect x="1" y="7.5" width="2" height="2"/><rect x="4.5" y="7.5" width="2" height="2"/><rect x="8" y="7.5" width="2" height="2"/></g>
</svg>
<div id="taskbar"></div>
<svg class="abs" style="left:0;top:716px;" width="1024" height="4" viewBox="0 0 1024 4" preserveAspectRatio="none">
 <path d="M0 0 H91.5 L95.5 4 H0Z" fill="#4f9a50"/><path d="M0 0 H91 L92 1 H0Z" fill="#3f7f45"/>
 <rect x="95" y="0" width="929" height="1" fill="#356ed2"/>
 <rect x="950" y="0" width="74" height="4" fill="#2f96ea"/><rect x="950" y="0" width="1" height="4" fill="#1c4fae"/>
</svg>
</div>
</body>
</html>
